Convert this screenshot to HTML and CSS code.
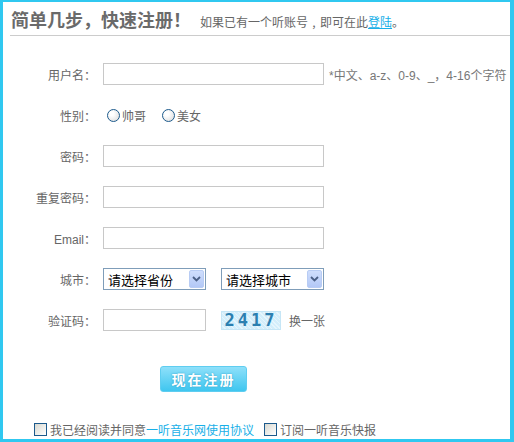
FILE: index.html
```html
<!DOCTYPE html>
<html lang="zh-CN">
<head>
<meta charset="UTF-8">
<title>简单几步，快速注册</title>
<link rel="stylesheet" href="styles.css">
</head>
<body>
<div class="frame">
    <div class="head">
        <h1>简单几步，快速注册！</h1>
        <span class="head-tip">如果已有一个听账号<span class="comma">,</span>即可在此<a href="#">登陆</a>。</span>
    </div>

    <form class="reg">
        <div class="row">
            <label>用户名：</label>
            <input type="text" class="txt">
            <span class="hint">*中文、a-z、0-9、_，4-16个字符</span>
        </div>
        <div class="row">
            <label>性别：</label>
            <span class="radio"></span><span class="opt">帅哥</span>
            <span class="radio"></span><span class="opt">美女</span>
        </div>
        <div class="row">
            <label>密码：</label>
            <input type="password" class="txt">
        </div>
        <div class="row">
            <label>重复密码：</label>
            <input type="password" class="txt">
        </div>
        <div class="row">
            <label class="latin">Email：</label>
            <input type="text" class="txt">
        </div>
        <div class="row">
            <label>城市：</label>
            <div class="sel"><span>请选择省份</span><span class="arrow"><svg width="9" height="6" viewBox="0 0 9 6"><path d="M1 1l3.5 3.5L8 1" fill="none" stroke="#4a5f86" stroke-width="1.8"/></svg></span></div>
            <div class="sel"><span>请选择城市</span><span class="arrow"><svg width="9" height="6" viewBox="0 0 9 6"><path d="M1 1l3.5 3.5L8 1" fill="none" stroke="#4a5f86" stroke-width="1.8"/></svg></span></div>
        </div>
        <div class="row">
            <label>验证码：</label>
            <input type="text" class="txt short">
            <span class="captcha">2417</span>
            <a href="#" class="swap">换一张</a>
        </div>

        <div class="submit-row">
            <button type="button" class="btn">现在注册</button>
        </div>
    </form>

    <div class="agree">
        <span class="check"></span><span>我已经阅读并同意<a href="#">一听音乐网使用协议</a></span>
        <span class="check second"></span><span>订阅一听音乐快报</span>
    </div>
</div>
</body>
</html>
```
FILE: styles.css
```css
body {
    margin: 0;
    padding: 0;
    background: #ffffff;
    font-family: "Liberation Sans", "Noto Sans CJK SC", sans-serif;
    font-size: 12px;
    color: #666666;
}

.frame {
    width: 514px;
    height: 442px;
    box-sizing: border-box;
    border-style: solid;
    border-color: #30c8f0;
    border-width: 2px 4px 3px 3px;
    overflow: hidden;
}

.head {
    margin-left: 7px;
    padding-left: 1px;
    height: 34px;
    border-bottom: 1px solid #cccccc;
    display: flex;
    align-items: baseline;
    padding-top: 0;
    box-sizing: border-box;
    line-height: 34px;
}

.head h1 {
    margin: 0;
    font-size: 18px;
    font-weight: bold;
    color: #6a6a6a;
    font-family: "Noto Sans CJK SC", sans-serif;
}

.head-tip {
    margin-left: 9px;
    font-size: 12px;
    color: #666666;
    font-family: "Noto Sans CJK SC", sans-serif;
}

.head-tip .comma {
    display: inline-block;
    width: 12px;
    text-align: center;
}

.head-tip a {
    color: #18b0e8;
    text-decoration: underline;
}

.reg {
    margin: 27px 0 0 7px;
}

.row {
    display: flex;
    align-items: center;
    height: 22px;
    margin-bottom: 19px;
    white-space: nowrap;
}

.row label {
    width: 86px;
    margin-right: 7px;
    text-align: right;
    font-family: "Noto Sans CJK SC", sans-serif;
    color: #666666;
}

.row label.latin {
    font-family: "Liberation Sans", "Noto Sans CJK SC", sans-serif;
}

.txt {
    width: 221px;
    height: 22px;
    box-sizing: border-box;
    border: 1px solid #c8c8c8;
    margin: 0;
    padding: 2px 4px;
    outline: none;
}

.txt.short {
    width: 103px;
}

.hint {
    margin-left: 5px;
    color: #777777;
}

.radio {
    width: 11px;
    height: 11px;
    border: 1px solid #1c5a8c;
    border-radius: 50%;
    background: radial-gradient(circle at 35% 35%, #ffffff 20%, #d8d8d8 100%);
    margin: 0 2px 0 4px;
}

.opt {
    margin-right: 12px;
    font-family: "Noto Sans CJK SC", sans-serif;
}

.sel {
    width: 103px;
    height: 22px;
    box-sizing: border-box;
    border: 1px solid #7f9db9;
    display: flex;
    align-items: center;
    justify-content: space-between;
    padding: 1px 1px 1px 4px;
    margin-right: 15px;
    font-family: "Noto Sans CJK SC", sans-serif;
    font-size: 13px;
    color: #000000;
}

.sel .arrow {
    width: 15px;
    height: 18px;
    box-sizing: border-box;
    border: 1px solid #b8ccf4;
    border-radius: 2px;
    background: linear-gradient(#cfdefd, #b3c8f6);
    display: flex;
    align-items: center;
    justify-content: center;
}

.captcha {
    margin-left: 15px;
    width: 60px;
    height: 19px;
    box-sizing: border-box;
    border: 1px solid #c6e6f6;
    background: repeating-linear-gradient(45deg, #d4eefb 0, #d4eefb 2px, #e6f6fd 2px, #e6f6fd 3px);
    color: #2c7fb0;
    font-family: "DejaVu Sans Mono", monospace;
    font-weight: bold;
    font-size: 17px;
    letter-spacing: 3px;
    text-align: center;
    line-height: 17px;
}

.swap {
    margin-left: 8px;
    color: #666666;
    text-decoration: none;
    font-family: "Noto Sans CJK SC", sans-serif;
}

.submit-row {
    padding-left: 150px;
    margin-top: 35px;
}

.btn {
    width: 87px;
    height: 26px;
    border: 1px solid #5fcdf0;
    border-radius: 3px;
    background: linear-gradient(#8ee0fa, #3fc6ef);
    color: #ffffff;
    font-family: "Noto Sans CJK SC", sans-serif;
    font-weight: bold;
    font-size: 14px;
    letter-spacing: 2px;
    text-shadow: 0 0 2px #2a9dc4;
    cursor: pointer;
    padding: 0;
}

.agree {
    display: flex;
    align-items: center;
    margin: 29px 0 0 31px;
    height: 16px;
    font-family: "Noto Sans CJK SC", sans-serif;
    white-space: nowrap;
}

.agree a {
    color: #18b0e8;
    text-decoration: none;
}

.check {
    width: 11px;
    height: 11px;
    border: 1px solid #1c5a8c;
    background: linear-gradient(135deg, #d8d8d0, #ffffff);
    margin-right: 3px;
}

.check.second {
    margin-left: 10px;
}
```
